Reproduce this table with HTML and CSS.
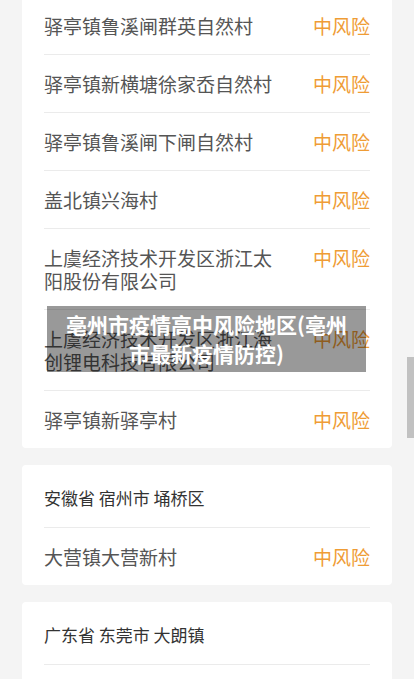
FILE: index.html
```html
<!DOCTYPE html>
<html lang="zh-CN">
<head>
<meta charset="utf-8">
<title>亳州市疫情高中风险地区</title>
<link rel="stylesheet" href="styles.css">
</head>
<body>
<main class="page">
  <section class="card card-first">
    <ul class="list">
      <li class="row"><span class="place">驿亭镇鲁溪闸群英自然村</span><span class="risk">中风险</span></li>
      <li class="row"><span class="place">驿亭镇新横塘徐家岙自然村</span><span class="risk">中风险</span></li>
      <li class="row"><span class="place">驿亭镇鲁溪闸下闸自然村</span><span class="risk">中风险</span></li>
      <li class="row"><span class="place">盖北镇兴海村</span><span class="risk">中风险</span></li>
      <li class="row"><span class="place">上虞经济技术开发区浙江太阳股份有限公司</span><span class="risk">中风险</span></li>
      <li class="row"><span class="place">上虞经济技术开发区浙江海创锂电科技有限公司</span><span class="risk">中风险</span></li>
      <li class="row"><span class="place">驿亭镇新驿亭村</span><span class="risk">中风险</span></li>
    </ul>
  </section>
  <section class="card">
    <h2 class="region">安徽省 宿州市 埇桥区</h2>
    <ul class="list">
      <li class="row"><span class="place">大营镇大营新村</span><span class="risk">中风险</span></li>
    </ul>
  </section>
  <section class="card">
    <h2 class="region">广东省 东莞市 大朗镇</h2>
  </section>
</main>
<div class="title-overlay">亳州市疫情高中风险地区(亳州市最新疫情防控)</div>
<div class="scroll-thumb"></div>
</body>
</html>
```

FILE: styles.css
```css
html, body {
  margin: 0;
  padding: 0;
  height: 100%;
  overflow: hidden;
}
body {
  background: #f4f4f4;
  font-family: "Noto Sans CJK SC", "Noto Sans", sans-serif;
  position: relative;
}
.page {
  display: flex;
  flex-direction: column;
  gap: 17px;
  padding: 0 22px;
  margin-top: -3px;
}
.card {
  background: #fff;
  border-radius: 4px;
  padding: 0 22px 20px;
}
.card-first {
  border-top-left-radius: 0;
  border-top-right-radius: 0;
  padding-bottom: 0;
}
.card:not(.card-first):not(:last-child) {
  padding-bottom: 0;
}
.list {
  list-style: none;
  margin: 0;
  padding: 0;
}
.row {
  display: flex;
  justify-content: space-between;
  align-items: flex-start;
  padding: 17px 0;
  border-bottom: 1px solid #ebebeb;
  font-size: 19px;
  line-height: 23px;
}
.card .row:last-child {
  border-bottom: none;
}
.place {
  color: #555;
  width: 238px;
}
.risk {
  color: #ef9c35;
  white-space: nowrap;
}
.region {
  margin: 0;
  padding: 21px 0 18px;
  border-bottom: 1px solid #ebebeb;
  font-size: 17px;
  line-height: 23px;
  font-weight: normal;
  color: #333;
}
.title-overlay {
  position: absolute;
  top: 306px;
  left: 47px;
  width: 319px;
  box-sizing: border-box;
  padding: 4px 14px;
  background: rgba(0, 0, 0, 0.4);
  color: #fff;
  font-size: 21px;
  font-weight: bold;
  line-height: 29px;
  text-align: center;
}
.scroll-thumb {
  position: absolute;
  top: 357px;
  right: 0;
  width: 7px;
  height: 81px;
  background: #c1c1c1;
}
```
